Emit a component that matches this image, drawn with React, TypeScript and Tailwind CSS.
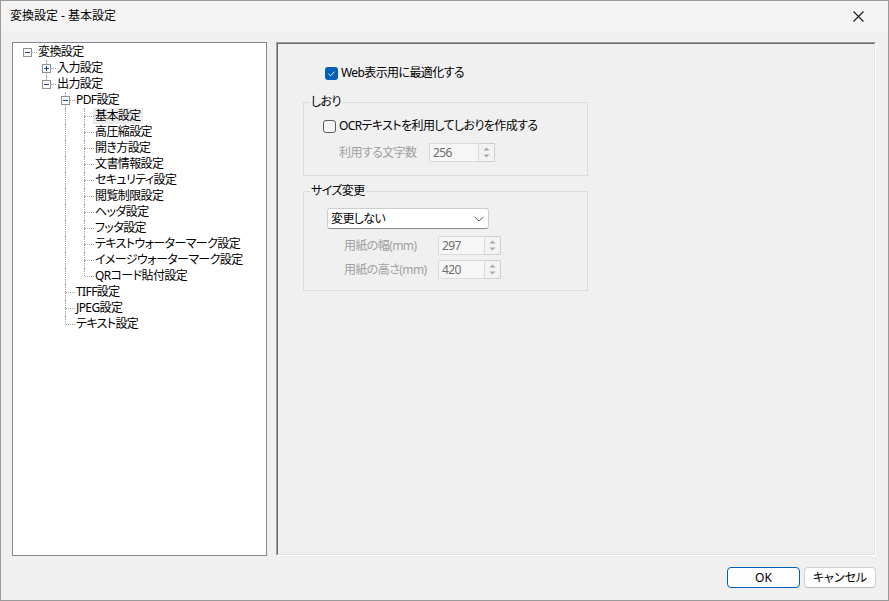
import React from 'react';

type TreeNode = {
  label: string;
  level: number;
  exp?: 'plus' | 'minus';
  last?: boolean;
  selected?: boolean;
};

const nodes: TreeNode[] = [
  { label: '変換設定', level: 0, exp: 'minus', last: true },
  { label: '入力設定', level: 1, exp: 'plus' },
  { label: '出力設定', level: 1, exp: 'minus', last: true },
  { label: 'PDF設定', level: 2, exp: 'minus' },
  { label: '基本設定', level: 3, selected: true },
  { label: '高圧縮設定', level: 3 },
  { label: '開き方設定', level: 3 },
  { label: '文書情報設定', level: 3 },
  { label: 'セキュリティ設定', level: 3 },
  { label: '閲覧制限設定', level: 3 },
  { label: 'ヘッダ設定', level: 3 },
  { label: 'フッタ設定', level: 3 },
  { label: 'テキストウォーターマーク設定', level: 3 },
  { label: 'イメージウォーターマーク設定', level: 3 },
  { label: 'QRコード貼付設定', level: 3, last: true },
  { label: 'TIFF設定', level: 2 },
  { label: 'JPEG設定', level: 2 },
  { label: 'テキスト設定', level: 2, last: true },
];

// for each lane below the node's own level: does the ancestor at that level have more siblings?
const laneOpen = (i: number) => {
  const res: boolean[] = [];
  for (let j = 0; j < nodes[i].level; j++) {
    let k = i - 1;
    while (k >= 0 && nodes[k].level !== j) k--;
    res.push(k >= 0 ? !nodes[k].last : false);
  }
  return res;
};

const Expander = ({ kind }: { kind: 'plus' | 'minus' }) => (
  <div className="absolute left-[5px] top-[4px] flex h-[9px] w-[9px] items-center justify-center border border-[#919191] bg-white">
    <div className="relative h-[5px] w-[5px]">
      <div className="absolute left-0 top-[2px] h-[1px] w-[5px] bg-[#1c3f94]" />
      {kind === 'plus' && <div className="absolute left-[2px] top-0 h-[5px] w-[1px] bg-[#1c3f94]" />}
    </div>
  </div>
);

const TreeRow = ({ node, index }: { node: TreeNode; index: number }) => {
  const open = laneOpen(index);
  return (
    <div className="flex h-[16px]">
      {open.map((o, j) => (
        <div key={j} className="relative w-[19px] shrink-0">
          {o && <div className="absolute left-[9px] top-0 h-[16px] border-l border-dotted border-[#a0a0a0]" />}
        </div>
      ))}
      <div className="relative w-[19px] shrink-0">
        {node.level > 0 && (
          <div className="absolute left-[9px] top-0 h-[8px] border-l border-dotted border-[#a0a0a0]" />
        )}
        {node.level > 0 && !node.last && (
          <div className="absolute left-[9px] top-[8px] h-[8px] border-l border-dotted border-[#a0a0a0]" />
        )}
        <div className="absolute left-[10px] right-0 top-[8px] border-t border-dotted border-[#a0a0a0]" />
        {node.exp && <Expander kind={node.exp} />}
      </div>
      <span
        className={
          'ml-[-1px] whitespace-nowrap px-[2px] leading-[16px] text-black' +
          (node.selected ? ' bg-[#ececec]' : '')
        }
      >
        {node.label}
      </span>
    </div>
  );
};

const CheckBox = ({ checked }: { checked?: boolean }) =>
  checked ? (
    <div className="flex h-[13px] w-[13px] shrink-0 items-center justify-center rounded-[3px] bg-[#005fb8]">
      <svg width="13" height="13" viewBox="0 0 13 13">
        <path d="M3.5 6.8 L5.6 8.8 L9.6 4.6" fill="none" stroke="white" strokeWidth="1" />
      </svg>
    </div>
  ) : (
    <div className="h-[13px] w-[13px] shrink-0 rounded-[3px] border border-[#5c5c5c] bg-[#f5f5f5]" />
  );

const Spin = ({ value, fieldClass }: { value: string; fieldClass: string }) => (
  <div className="flex h-[19px]">
    <div
      className={
        fieldClass +
        ' flex h-full items-center border border-[#dadada] bg-[#f6f6f6] pl-[3px] text-[#6d6d6d]'
      }
    >
      {value}
    </div>
    <div className="flex h-full w-[16px] flex-col items-center justify-center gap-[3px] border border-l-0 border-[#cfcfcf] bg-[#f3f3f3]">
      <svg width="7" height="4" viewBox="0 0 7 4">
        <path d="M0.5 3.5 L3.5 0.5 L6.5 3.5 Z" fill="#a8a8a8" />
      </svg>
      <svg width="7" height="4" viewBox="0 0 7 4">
        <path d="M0.5 0.5 L3.5 3.5 L6.5 0.5 Z" fill="#a8a8a8" />
      </svg>
    </div>
  </div>
);

export default function App() {
  return (
    <div className="flex h-[601px] w-[889px] flex-col border border-[#9b9b9b] bg-[#f0f0f0] font-['Noto_Sans','Noto_Sans_CJK_JP',sans-serif] text-[12px] leading-[16px] text-black [font-feature-settings:'palt']">
      {/* title bar */}
      <div className="flex h-[30px] shrink-0 items-center justify-between bg-[#f3f3f3] pl-[9px] pr-[24px]">
        <span>変換設定 - 基本設定</span>
        <svg width="11" height="11" viewBox="0 0 11 11">
          <path d="M0.5 0.5 L10.5 10.5 M10.5 0.5 L0.5 10.5" stroke="#1a1a1a" strokeWidth="1.1" />
        </svg>
      </div>

      {/* body */}
      <div className="flex pl-[11px] pt-[11px] tracking-[-0.6px]">
        <div className="h-[514px] w-[255px] shrink-0 border border-[#828790] bg-white pl-[5px] pt-[1px]">
          {nodes.map((n, i) => (
            <TreeRow key={i} node={n} index={i} />
          ))}
        </div>

        <div className="ml-[9px] h-[514px] w-[600px] shrink-0 border border-t-[#a0a0a0] border-l-[#a0a0a0] border-r-white border-b-white">
          <div className="flex h-full flex-col border border-t-[#696969] border-l-[#696969] border-r-[#e3e3e3] border-b-[#e3e3e3] bg-[#f0f0f0]">
            <div className="ml-[47px] mt-[21px] flex h-[16px] items-center gap-[3px]">
              <CheckBox checked />
              <span>Web表示用に最適化する</span>
            </div>

            <fieldset className="ml-[25px] mt-[13px] w-[285px] border border-[#dcdcdc] pb-[13px]">
              <legend className="ml-[6px] px-[1px] leading-[16px]">しおり</legend>
              <div className="ml-[19px] mt-[8px] flex h-[16px] items-center gap-[3px]">
                <CheckBox />
                <span>OCRテキストを利用してしおりを作成する</span>
              </div>
              <div className="mt-[9px] flex h-[19px] items-center pl-[35px]">
                <span className="w-[90px] text-[#a0a0a0]">利用する文字数</span>
                <Spin value="256" fieldClass="w-[50px]" />
              </div>
            </fieldset>

            <fieldset className="ml-[25px] mt-[7px] w-[285px] border border-[#dcdcdc] pb-[11px]">
              <legend className="ml-[6px] px-[1px] leading-[16px]">サイズ変更</legend>
              <div className="ml-[23px] mt-[9px] flex h-[21px] w-[162px] items-center justify-between rounded-[3px] border border-[#cdcdcd] border-b-[#8a8a8a] bg-white pl-[3px] pr-[4px]">
                <span>変更しない</span>
                <svg width="10" height="6" viewBox="0 0 10 6">
                  <path d="M0.5 0.8 L5 5 L9.5 0.8" fill="none" stroke="#5f5f5f" strokeWidth="1" />
                </svg>
              </div>
              <div className="mt-[7px] flex h-[19px] items-center pl-[40px]">
                <span className="w-[94px] text-[#a0a0a0]">用紙の幅(mm)</span>
                <Spin value="297" fieldClass="w-[47px]" />
              </div>
              <div className="mt-[5px] flex h-[19px] items-center pl-[40px]">
                <span className="w-[94px] text-[#a0a0a0]">用紙の高さ(mm)</span>
                <Spin value="420" fieldClass="w-[47px]" />
              </div>
            </fieldset>
          </div>
        </div>
      </div>

      {/* footer buttons */}
      <div className="mr-[12px] mt-[11px] flex justify-end gap-[4px]">
        <button className="h-[21px] w-[73px] rounded-[4px] border border-[#005fb8] bg-[#fdfdfd] leading-[16px]">
          OK
        </button>
        <button className="h-[21px] w-[72px] rounded-[4px] border border-[#d0d0d0] border-b-[#bcbcbc] bg-[#fdfdfd] leading-[16px]">
          キャンセル
        </button>
      </div>
    </div>
  );
}
